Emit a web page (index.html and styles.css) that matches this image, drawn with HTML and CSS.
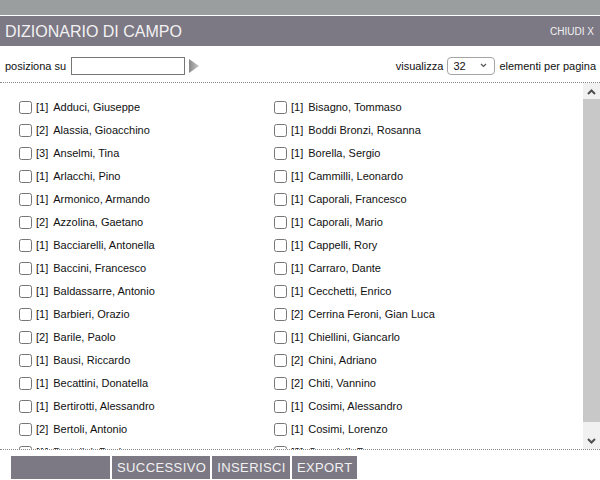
FILE: index.html
```html
<!DOCTYPE html>
<html lang="it">
<head>
<meta charset="utf-8">
<title>Dizionario di campo</title>
<link rel="stylesheet" href="styles.css">
</head>
<body>
<div class="topbar"></div>
<div class="titlebar">
  <span class="title">DIZIONARIO DI CAMPO</span>
  <span class="close">CHIUDI X</span>
</div>
<div class="toolbar">
  <div class="pos">
    <label class="lbl">posiziona su</label>
    <input class="posinput" type="text">
    <svg class="go" width="10" height="14" viewBox="0 0 10 14"><defs><linearGradient id="g" x1="0" x2="1"><stop offset="0" stop-color="#888"/><stop offset="1" stop-color="#c8c8c8"/></linearGradient></defs><path d="M0 0 L10 7 L0 14 Z" fill="url(#g)"/></svg>
  </div>
  <div class="view">
    <span class="lbl">visualizza</span>
    <select class="sel"><option>32</option></select>
    <span class="lbl">elementi per pagina</span>
  </div>
</div>
<div class="listwrap">
  <div class="list">
    <div class="col">
      <label class="item"><input type="checkbox"><span class="n">[1]</span><span>Adduci, Giuseppe</span></label>
      <label class="item"><input type="checkbox"><span class="n">[2]</span><span>Alassia, Gioacchino</span></label>
      <label class="item"><input type="checkbox"><span class="n">[3]</span><span>Anselmi, Tina</span></label>
      <label class="item"><input type="checkbox"><span class="n">[1]</span><span>Arlacchi, Pino</span></label>
      <label class="item"><input type="checkbox"><span class="n">[1]</span><span>Armonico, Armando</span></label>
      <label class="item"><input type="checkbox"><span class="n">[2]</span><span>Azzolina, Gaetano</span></label>
      <label class="item"><input type="checkbox"><span class="n">[1]</span><span>Bacciarelli, Antonella</span></label>
      <label class="item"><input type="checkbox"><span class="n">[1]</span><span>Baccini, Francesco</span></label>
      <label class="item"><input type="checkbox"><span class="n">[1]</span><span>Baldassarre, Antonio</span></label>
      <label class="item"><input type="checkbox"><span class="n">[1]</span><span>Barbieri, Orazio</span></label>
      <label class="item"><input type="checkbox"><span class="n">[2]</span><span>Barile, Paolo</span></label>
      <label class="item"><input type="checkbox"><span class="n">[1]</span><span>Bausi, Riccardo</span></label>
      <label class="item"><input type="checkbox"><span class="n">[1]</span><span>Becattini, Donatella</span></label>
      <label class="item"><input type="checkbox"><span class="n">[1]</span><span>Bertirotti, Alessandro</span></label>
      <label class="item"><input type="checkbox"><span class="n">[2]</span><span>Bertoli, Antonio</span></label>
      <label class="item"><input type="checkbox"><span class="n">[1]</span><span>Bertolini, Paolo</span></label>
    </div>
    <div class="col">
      <label class="item"><input type="checkbox"><span class="n">[1]</span><span>Bisagno, Tommaso</span></label>
      <label class="item"><input type="checkbox"><span class="n">[1]</span><span>Boddi Bronzi, Rosanna</span></label>
      <label class="item"><input type="checkbox"><span class="n">[1]</span><span>Borella, Sergio</span></label>
      <label class="item"><input type="checkbox"><span class="n">[1]</span><span>Cammilli, Leonardo</span></label>
      <label class="item"><input type="checkbox"><span class="n">[1]</span><span>Caporali, Francesco</span></label>
      <label class="item"><input type="checkbox"><span class="n">[1]</span><span>Caporali, Mario</span></label>
      <label class="item"><input type="checkbox"><span class="n">[1]</span><span>Cappelli, Rory</span></label>
      <label class="item"><input type="checkbox"><span class="n">[1]</span><span>Carraro, Dante</span></label>
      <label class="item"><input type="checkbox"><span class="n">[1]</span><span>Cecchetti, Enrico</span></label>
      <label class="item"><input type="checkbox"><span class="n">[2]</span><span>Cerrina Feroni, Gian Luca</span></label>
      <label class="item"><input type="checkbox"><span class="n">[1]</span><span>Chiellini, Giancarlo</span></label>
      <label class="item"><input type="checkbox"><span class="n">[2]</span><span>Chini, Adriano</span></label>
      <label class="item"><input type="checkbox"><span class="n">[2]</span><span>Chiti, Vannino</span></label>
      <label class="item"><input type="checkbox"><span class="n">[1]</span><span>Cosimi, Alessandro</span></label>
      <label class="item"><input type="checkbox"><span class="n">[1]</span><span>Cosimi, Lorenzo</span></label>
      <label class="item"><input type="checkbox"><span class="n">[2]</span><span>Crescioli, Franco</span></label>
    </div>
  </div>
  <div class="scrollbar">
    <div class="sb-btn"><svg width="9" height="6" viewBox="0 0 9 6"><path d="M1 5 L4.5 1.5 L8 5" fill="none" stroke="#505050" stroke-width="2"/></svg></div>
    <div class="sb-thumb"></div>
    <div class="sb-btn sb-down"><svg width="9" height="6" viewBox="0 0 9 6"><path d="M1 1 L4.5 4.5 L8 1" fill="none" stroke="#505050" stroke-width="2"/></svg></div>
  </div>
</div>
<div class="buttons">
  <span class="btn btn-empty"></span>
  <span class="btn">SUCCESSIVO</span>
  <span class="btn">INSERISCI</span>
  <span class="btn">EXPORT</span>
</div>
</body>
</html>
```
FILE: styles.css
```css
html, body {
  margin: 0;
  padding: 0;
  background: #fff;
  font-family: "Liberation Sans", Arial, sans-serif;
  color: #111;
  width: 600px;
  height: 480px;
  overflow: hidden;
}
.topbar {
  height: 15px;
  background: #9a9e9e;
  border-bottom: 1px solid #fff;
}
.titlebar {
  height: 30px;
  background: #7c7884;
  display: flex;
  align-items: center;
  justify-content: space-between;
  padding: 0 6px 0 5px;
  color: #f2f2f2;
}
.title {
  font-size: 16px;
  line-height: 30px;
  padding-top: 1px;
}
.close {
  font-size: 10px;
}
.toolbar {
  height: 36px;
  display: flex;
  align-items: center;
  justify-content: space-between;
  padding: 0 4px 0 5px;
  border-bottom: 1px dotted #888;
  font-size: 11px;
}
.pos, .view {
  display: flex;
  align-items: center;
  gap: 4px;
  padding-top: 3px;
}
.posinput {
  width: 114px;
  height: 18px;
  box-sizing: border-box;
  margin: 0 0 0 1px;
  border: 1px solid #767676;
  padding: 0 2px;
  font-size: 11px;
}
.sel {
  -webkit-appearance: none;
  appearance: none;
  width: 48px;
  height: 18px;
  box-sizing: border-box;
  margin: 0;
  padding: 0 0 0 5px;
  font-size: 11px;
  color: #111;
  font-family: "Liberation Sans", Arial, sans-serif;
  border: 1px solid #a4a4a4;
  border-radius: 4px;
  background: #fff url("data:image/svg+xml,%3Csvg xmlns='http://www.w3.org/2000/svg' width='7' height='5' viewBox='0 0 7 5'%3E%3Cpath d='M1 1 L3.5 3.5 L6 1' fill='none' stroke='%23555' stroke-width='1.2'/%3E%3C/svg%3E") no-repeat right 7px center;
}
.listwrap {
  height: 366px;
  display: flex;
  border-bottom: 1px dotted #888;
}
.list {
  flex: 1;
  display: flex;
  padding: 12px 0 0 19px;
  overflow: hidden;
}
.col {
  width: 255px;
  display: flex;
  flex-direction: column;
}
.item {
  height: 23px;
  flex: none;
  display: flex;
  align-items: center;
  font-size: 11px;
}
.item input {
  width: 13px;
  height: 13px;
  margin: 1px 4px 0 0;
}
.n {
  margin-right: 5px;
}
.scrollbar {
  width: 17px;
  background: #f1f1f1;
  display: flex;
  flex-direction: column;
}
.sb-btn {
  height: 14px;
  display: flex;
  align-items: center;
  justify-content: center;
  padding-top: 2px;
}
.sb-down {
  margin-top: auto;
  height: 16px;
  padding-top: 0;
}
.sb-thumb {
  height: 323px;
  background: #c8c8c8;
}
.buttons {
  display: flex;
  gap: 2px;
  padding: 6px 0 0 11px;
}
.btn {
  height: 23px;
  background: #7c7884;
  color: #f2f2f2;
  font-size: 13px;
  letter-spacing: 0.4px;
  display: flex;
  align-items: center;
  padding: 0 4px 0 5px;
}
.btn-empty {
  width: 99px;
  padding: 0;
}
```
